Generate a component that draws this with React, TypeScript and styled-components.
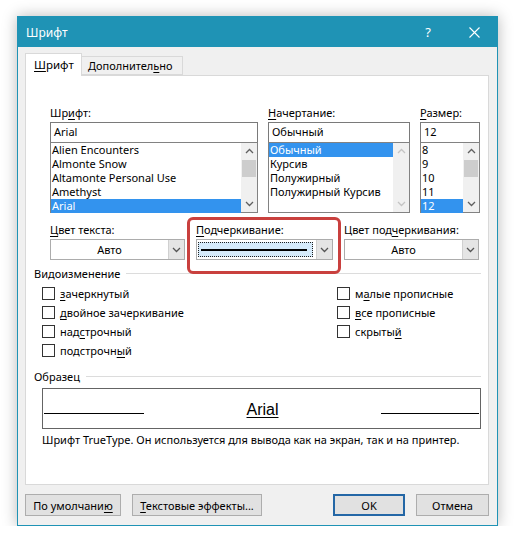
import React from "react";
import styled, { createGlobalStyle, css } from "styled-components";

const UI_FONT = `"Noto Sans", "Open Sans", sans-serif`;

const Global = createGlobalStyle`
  html, body { margin: 0; padding: 0; background: #ffffff; }
  body { font-family: ${UI_FONT}; font-size: 11px; color: #000; }
  * { box-sizing: border-box; }
`;

const Window = styled.div`
  margin: 16px 0 0 17px;
  width: 481px;
  height: 510px;
  border: 1px solid #1f93b5;
  background: #f0f0f0;
  box-shadow: 0 0 14px rgba(0, 0, 0, 0.28);
  display: flex;
  flex-direction: column;
`;

const TitleBar = styled.div`
  height: 30px;
  background: #1f93b5;
  color: #fff;
  display: flex;
  align-items: center;
  padding-left: 8px;
  font-size: 12px;
`;

const Title = styled.div`
  flex: 1;
`;

const TitleButton = styled.div<{ $w: number }>`
  width: ${(p) => p.$w}px;
  height: 30px;
  display: flex;
  align-items: center;
  justify-content: center;
  color: #fff;
  font-size: 13px;
`;

const Body = styled.div`
  flex: 1;
  padding: 6px 8px 0 7px;
  display: flex;
  flex-direction: column;
`;

const Tabs = styled.div`
  display: flex;
  align-items: flex-end;
  height: 22px;
  position: relative;
  z-index: 1;
`;

const Tab = styled.div<{ $active?: boolean }>`
  border: 1px solid #d9d9d9;
  display: flex;
  align-items: center;
  ${(p) =>
    p.$active
      ? css`
          width: 57px;
          height: 23px;
          margin-bottom: -1px;
          background: #fff;
          border-bottom: none;
          padding: 0 0 2px 8px;
          font-size: 11.5px;
        `
      : css`
          width: 101px;
          height: 19px;
          background: #f0f0f0;
          border-left: none;
          padding-left: 6px;
        `}
`;

const U = styled.span`
  text-decoration: underline;
  text-underline-offset: 2px;
`;

const Panel = styled.div`
  height: 410px;
  background: #fff;
  border: 1px solid #d9d9d9;
  padding: 29px 7px 0 8px;
  display: flex;
  flex-direction: column;
`;

const FontGrid = styled.div`
  display: grid;
  grid-template-columns: 208px 142px 60px;
  column-gap: 10px;
  margin-left: 16px;
`;

const Field = styled.div`
  display: flex;
  flex-direction: column;
`;

const Label = styled.div`
  height: 16px;
  line-height: 16px;
  margin-bottom: 1px;
  white-space: nowrap;
`;

const TextInput = styled.div`
  height: 20px;
  border: 1px solid #7a7a7a;
  border-bottom: none;
  padding: 0 0 0 3px;
  line-height: 18px;
  background: #fff;
`;

const ListBox = styled.div`
  height: 71px;
  border: 1px solid #828282;
  display: flex;
  background: #fff;
`;

const Items = styled.div`
  flex: 1;
  min-width: 0;
`;

const Item = styled.div<{ $sel?: boolean }>`
  height: 14px;
  line-height: 14px;
  padding-left: 1px;
  white-space: nowrap;
  ${(p) =>
    p.$sel &&
    css`
      background: #3393ee;
      color: #fff;
    `}
`;

const ScrollBar = styled.div`
  width: 16px;
  background: #f0f0f0;
  display: flex;
  flex-direction: column;
  align-items: stretch;
`;

const ScrollArrow = styled.div<{ $dim?: boolean }>`
  height: 16px;
  display: flex;
  align-items: center;
  justify-content: center;
  color: ${(p) => (p.$dim ? "#c4c4c4" : "#606060")};
`;

const ScrollTrack = styled.div`
  flex: 1;
  display: flex;
  flex-direction: column;
`;

const Thumb = styled.div`
  height: 17px;
  margin: 1px 1px 0;
  background: #cdcdcd;
`;

const ColorRow = styled.div`
  display: grid;
  grid-template-columns: 135px 137px 135px;
  column-gap: 11px;
  margin: 9px 0 0 16px;
`;

const Highlighted = styled.div`
  position: relative;
  display: flex;
  flex-direction: column;
`;

const RedFrame = styled.div`
  position: absolute;
  top: -5px;
  left: -9px;
  right: -8px;
  bottom: -14px;
  border: 3px solid #c9403e;
  border-radius: 6px;
  pointer-events: none;
`;

const Combo = styled.div`
  height: 21px;
  border: 1px solid #acacac;
  background: #fff;
  display: flex;
`;

const ComboValue = styled.div`
  flex: 1;
  text-align: center;
  line-height: 19px;
`;

const LineValue = styled.div`
  flex: 1;
  padding: 2px 3px 2px 1px;
  display: flex;
`;

const FocusBox = styled.div`
  flex: 1;
  background: #d6ebfb;
  border: 1px dotted #202020;
  display: flex;
  align-items: center;
  padding: 0 5px 0 2px;
`;

const ThickLine = styled.div`
  flex: 1;
  height: 2px;
  background: #000;
`;

const ComboArrow = styled.div`
  width: 16px;
  background: #e5e5e5;
  border-left: 1px solid #d0d0d0;
  display: flex;
  align-items: center;
  justify-content: center;
  color: #555;
`;

const GroupHeading = styled.div<{ $top: number }>`
  display: flex;
  align-items: center;
  height: 16px;
  margin-top: ${(p) => p.$top}px;
  &::after {
    content: "";
    flex: 1;
    margin-left: 6px;
    border-top: 1px solid #dcdcdc;
  }
`;

const Checks = styled.div`
  display: grid;
  grid-template-columns: 295px 1fr;
  grid-auto-flow: column;
  grid-template-rows: repeat(4, 19px);
  margin: 3px 0 0 8px;
`;

const CheckRow = styled.div`
  display: flex;
  align-items: center;
  white-space: nowrap;
`;

const Box = styled.span`
  width: 13px;
  height: 13px;
  border: 1px solid #333;
  background: #fff;
  margin-right: 5px;
  flex: none;
`;

const Sample = styled.div`
  height: 41px;
  margin: 4px 0 0 8px;
  border: 1px solid #646464;
  display: grid;
  grid-template-columns: 100px 1fr 98px;
  padding: 0 1px;
`;

const SampleLine = styled.div`
  height: 1px;
  background: #000;
  align-self: end;
  margin-bottom: 14px;
`;

const SampleText = styled.div`
  align-self: center;
  text-align: center;
  font-family: "Liberation Sans", Arial, sans-serif;
  font-size: 16px;
  text-decoration: underline;
  text-underline-offset: 2px;
  padding-top: 2px;
`;

const Description = styled.div`
  margin: 3px 0 0 8px;
  height: 16px;
  line-height: 16px;
  white-space: nowrap;
`;

const Buttons = styled.div`
  display: flex;
  margin-top: 9px;
  gap: 11px;
`;

const Button = styled.div<{ $w: number; $default?: boolean; $push?: boolean }>`
  width: ${(p) => p.$w}px;
  height: 22px;
  background: #e1e1e1;
  border: 1px solid #adadad;
  display: flex;
  align-items: center;
  justify-content: center;
  white-space: nowrap;
  ${(p) => p.$push && "margin-left: auto;"}
  ${(p) =>
    p.$default &&
    css`
      border: 2px solid #2467a6;
    `}
`;

const Chevron = ({ up, size = 9 }: { up?: boolean; size?: number }) => (
  <svg width={size} height={6} viewBox="0 0 9 6">
    <polyline
      points={up ? "1,5 4.5,1.5 8,5" : "1,1 4.5,4.5 8,1"}
      fill="none"
      stroke="currentColor"
      strokeWidth="1.3"
    />
  </svg>
);

const Scroll = ({ disabled }: { disabled?: boolean }) => (
  <ScrollBar>
    <ScrollArrow $dim={disabled}>
      <Chevron up />
    </ScrollArrow>
    <ScrollTrack>{!disabled && <Thumb />}</ScrollTrack>
    <ScrollArrow $dim={disabled}>
      <Chevron />
    </ScrollArrow>
  </ScrollBar>
);

const DropArrow = () => (
  <ComboArrow>
    <Chevron size={9} />
  </ComboArrow>
);

const fonts = ["Alien Encounters", "Almonte Snow", "Altamonte Personal Use", "Amethyst", "Arial"];
const styles = ["Обычный", "Курсив", "Полужирный", "Полужирный Курсив"];
const sizes = ["8", "9", "10", "11", "12"];

export default function App() {
  return (
    <>
      <Global />
      <Window>
        <TitleBar>
          <Title>Шрифт</Title>
          <TitleButton $w={46}>?</TitleButton>
          <TitleButton $w={46}>
            <svg width="11" height="11" viewBox="0 0 11 11">
              <path d="M0.5 0.5 L10.5 10.5 M10.5 0.5 L0.5 10.5" stroke="#fff" strokeWidth="1.1" />
            </svg>
          </TitleButton>
        </TitleBar>
        <Body>
          <Tabs>
            <Tab $active>
              <span>
                <U>Ш</U>рифт
              </span>
            </Tab>
            <Tab>
              <span>
                Дополнител<U>ь</U>но
              </span>
            </Tab>
          </Tabs>
          <Panel>
            <FontGrid>
              <Field>
                <Label>
                  Шр<U>и</U>фт:
                </Label>
                <TextInput>Arial</TextInput>
                <ListBox>
                  <Items>
                    {fonts.map((f) => (
                      <Item key={f} $sel={f === "Arial"}>
                        {f}
                      </Item>
                    ))}
                  </Items>
                  <Scroll />
                </ListBox>
              </Field>
              <Field>
                <Label>
                  <U>Н</U>ачертание:
                </Label>
                <TextInput>Обычный</TextInput>
                <ListBox>
                  <Items>
                    {styles.map((s) => (
                      <Item key={s} $sel={s === "Обычный"}>
                        {s}
                      </Item>
                    ))}
                  </Items>
                  <Scroll disabled />
                </ListBox>
              </Field>
              <Field>
                <Label>
                  <U>Р</U>азмер:
                </Label>
                <TextInput>12</TextInput>
                <ListBox>
                  <Items>
                    {sizes.map((s) => (
                      <Item key={s} $sel={s === "12"}>
                        {s}
                      </Item>
                    ))}
                  </Items>
                  <Scroll />
                </ListBox>
              </Field>
            </FontGrid>

            <ColorRow>
              <Field>
                <Label>
                  <U>Ц</U>вет текста:
                </Label>
                <Combo>
                  <ComboValue>Авто</ComboValue>
                  <DropArrow />
                </Combo>
              </Field>
              <Highlighted>
                <Label>
                  <U>П</U>одчеркивание:
                </Label>
                <Combo>
                  <LineValue>
                    <FocusBox>
                      <ThickLine />
                    </FocusBox>
                  </LineValue>
                  <DropArrow />
                </Combo>
                <RedFrame />
              </Highlighted>
              <Field>
                <Label>
                  Цвет под<U>ч</U>еркивания:
                </Label>
                <Combo>
                  <ComboValue>Авто</ComboValue>
                  <DropArrow />
                </Combo>
              </Field>
            </ColorRow>

            <GroupHeading $top={5}>Видоизменение</GroupHeading>
            <Checks>
              <CheckRow>
                <Box />
                <span>
                  <U>з</U>ачеркнутый
                </span>
              </CheckRow>
              <CheckRow>
                <Box />
                <span>
                  <U>д</U>войное зачеркивание
                </span>
              </CheckRow>
              <CheckRow>
                <Box />
                <span>
                  над<U>с</U>трочный
                </span>
              </CheckRow>
              <CheckRow>
                <Box />
                <span>
                  подстрочн<U>ы</U>й
                </span>
              </CheckRow>
              <CheckRow>
                <Box />
                <span>
                  м<U>а</U>лые прописные
                </span>
              </CheckRow>
              <CheckRow>
                <Box />
                <span>
                  <U>в</U>се прописные
                </span>
              </CheckRow>
              <CheckRow>
                <Box />
                <span>
                  скрыты<U>й</U>
                </span>
              </CheckRow>
            </Checks>

            <GroupHeading $top={8}>Образец</GroupHeading>
            <Sample>
              <SampleLine />
              <SampleText>Arial</SampleText>
              <SampleLine />
            </Sample>
            <Description>
              Шрифт TrueType. Он используется для вывода как на экран, так и на принтер.
            </Description>
          </Panel>
          <Buttons>
            <Button $w={96}>
              <span>
                По умолчани<U>ю</U>
              </span>
            </Button>
            <Button $w={130}>
              <span>
                <U>Т</U>екстовые эффекты...
              </span>
            </Button>
            <Button $w={72} $default $push>
              OK
            </Button>
            <Button $w={73}>Отмена</Button>
          </Buttons>
        </Body>
      </Window>
    </>
  );
}
